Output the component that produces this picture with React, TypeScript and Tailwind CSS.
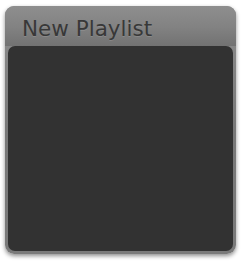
export default function App() {
  return (
    <div className="w-[243px] h-[265px] bg-white pt-[6px] pl-[5px]">
      <div className="w-[231px] h-[248px] rounded-[9px] bg-gradient-to-b from-[#8e8e8e] via-[#787878] to-[#7a7a7a] shadow-[0_2px_4px_rgba(0,0,0,0.45)] flex flex-col px-[3px] pb-[3px]">
        {/* Title bar */}
        <div className="h-[40px] pt-[11px] pl-[17px] pr-[3px] -mx-[3px] rounded-t-[9px] bg-gradient-to-b from-[#8e8e8e] via-[#838383] to-[#727272]">
          <span className="block text-[21.5px] leading-[24px] text-[#383838] font-['DejaVu_Sans',sans-serif] [text-shadow:0_1px_0_rgba(255,255,255,0.12)]">
            New Playlist
          </span>
        </div>
        {/* Content */}
        <div className="flex-1 rounded-[7px] bg-[#323232]" />
      </div>
    </div>
  )
}
